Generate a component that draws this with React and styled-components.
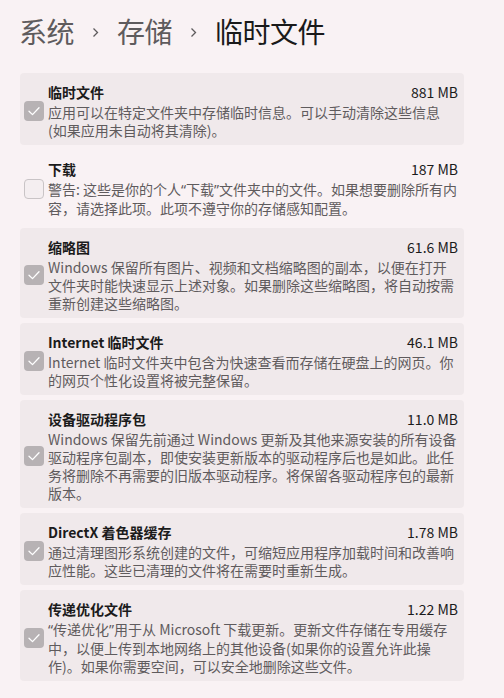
import styled, { createGlobalStyle } from "styled-components";

const GlobalStyle = createGlobalStyle`
  html, body {
    margin: 0;
    padding: 0;
    background: #f9f2f4;
  }
  body {
    font-family: "Noto Sans CJK SC", "Noto Sans", sans-serif;
    color: #1b1b1b;
  }
`;

const Page = styled.div`
  width: 504px;
  min-height: 698px;
  box-sizing: border-box;
  padding: 12px 40px 0 19px;
`;

const Breadcrumb = styled.div`
  display: flex;
  align-items: center;
  height: 38px;
  margin-bottom: 23px;
  font-size: 28px;
  line-height: 38px;
`;

const Crumb = styled.span`
  color: ${(p) => (p.$current ? "#1a1a1a" : "#5e5b5d")};
  letter-spacing: -0.5px;
`;

const ChevronWrap = styled.span`
  display: flex;
  align-items: center;
  margin: 2px 18px 0 18px;
`;

const List = styled.div`
  display: flex;
  flex-direction: column;
  gap: 5px;
  width: 444px;
  margin-left: 1px;
`;

const Item = styled.div`
  display: flex;
  align-items: center;
  padding: 10px 6px 6px 4px;
  border-radius: 4px;
  background: ${(p) => (p.$filled ? "#f0e9eb" : "transparent")};
`;

const Box = styled.span`
  flex: none;
  width: 20px;
  height: 20px;
  box-sizing: border-box;
  margin-right: 4px;
  border-radius: 4px;
  display: flex;
  align-items: center;
  justify-content: center;
  background: ${(p) => (p.$checked ? "#b7b2b4" : "#f4eef0")};
  border: ${(p) => (p.$checked ? "none" : "1px solid #c9c4c6")};
`;

const Body = styled.div`
  flex: 1;
  min-width: 0;
`;

const TitleRow = styled.div`
  display: flex;
  justify-content: space-between;
  align-items: baseline;
  line-height: 18px;
  margin-bottom: 2px;
`;

const Title = styled.span`
  font-size: 14px;
  font-weight: 700;
  color: #1b1b1b;
`;

const Size = styled.span`
  font-size: 14px;
  color: #1b1b1b;
`;

const Desc = styled.div`
  font-size: 14px;
  line-height: 18px;
  color: #5f5b5d;
`;

// half-width curly quotes, as the system UI font draws them
const Q = styled.span`
  font-family: "Noto Sans", "Liberation Sans", sans-serif;
`;

const Chevron = () => (
  <svg width="7" height="11" viewBox="0 0 7 11">
    <polyline
      points="1.5,1.5 5.5,5.5 1.5,9.5"
      fill="none"
      stroke="#5e5b5d"
      strokeWidth="1.3"
    />
  </svg>
);

const Check = () => (
  <svg width="20" height="20" viewBox="0 0 20 20">
    <polyline
      points="5,10.2 8.5,13.6 15,6.8"
      fill="none"
      stroke="#ffffff"
      strokeWidth="1.3"
      strokeLinecap="round"
      strokeLinejoin="round"
    />
  </svg>
);

const items = [
  {
    title: "临时文件",
    size: "881 MB",
    checked: true,
    desc: "应用可以在特定文件夹中存储临时信息。可以手动清除这些信息(如果应用未自动将其清除)。",
  },
  {
    title: "下载",
    size: "187 MB",
    checked: false,
    desc: (
      <>
        警告: 这些是你的个人<Q>“</Q>下载<Q>”</Q>
        文件夹中的文件。如果想要删除所有内容，请选择此项。此项不遵守你的存储感知配置。
      </>
    ),
  },
  {
    title: "缩略图",
    size: "61.6 MB",
    checked: true,
    desc: "Windows 保留所有图片、视频和文档缩略图的副本，以便在打开文件夹时能快速显示上述对象。如果删除这些缩略图，将自动按需重新创建这些缩略图。",
  },
  {
    title: "Internet 临时文件",
    size: "46.1 MB",
    checked: true,
    desc: "Internet 临时文件夹中包含为快速查看而存储在硬盘上的网页。你的网页个性化设置将被完整保留。",
  },
  {
    title: "设备驱动程序包",
    size: "11.0 MB",
    checked: true,
    desc: "Windows 保留先前通过 Windows 更新及其他来源安装的所有设备驱动程序包副本，即使安装更新版本的驱动程序后也是如此。此任务将删除不再需要的旧版本驱动程序。将保留各驱动程序包的最新版本。",
  },
  {
    title: "DirectX 着色器缓存",
    size: "1.78 MB",
    checked: true,
    desc: "通过清理图形系统创建的文件，可缩短应用程序加载时间和改善响应性能。这些已清理的文件将在需要时重新生成。",
  },
  {
    title: "传递优化文件",
    size: "1.22 MB",
    checked: true,
    desc: (
      <>
        <Q>“</Q>传递优化<Q>”</Q>
        用于从 Microsoft
        下载更新。更新文件存储在专用缓存中，以便上传到本地网络上的其他设备(如果你的设置允许此操作)。如果你需要空间，可以安全地删除这些文件。
      </>
    ),
  },
];

export default function App() {
  return (
    <>
      <GlobalStyle />
      <Page>
        <Breadcrumb>
          <Crumb>系统</Crumb>
          <ChevronWrap>
            <Chevron />
          </ChevronWrap>
          <Crumb>存储</Crumb>
          <ChevronWrap>
            <Chevron />
          </ChevronWrap>
          <Crumb $current>临时文件</Crumb>
        </Breadcrumb>
        <List>
          {items.map((it) => (
            <Item key={it.title} $filled={it.checked}>
              <Box $checked={it.checked}>{it.checked && <Check />}</Box>
              <Body>
                <TitleRow>
                  <Title>{it.title}</Title>
                  <Size>{it.size}</Size>
                </TitleRow>
                <Desc>{it.desc}</Desc>
              </Body>
            </Item>
          ))}
        </List>
      </Page>
    </>
  );
}
